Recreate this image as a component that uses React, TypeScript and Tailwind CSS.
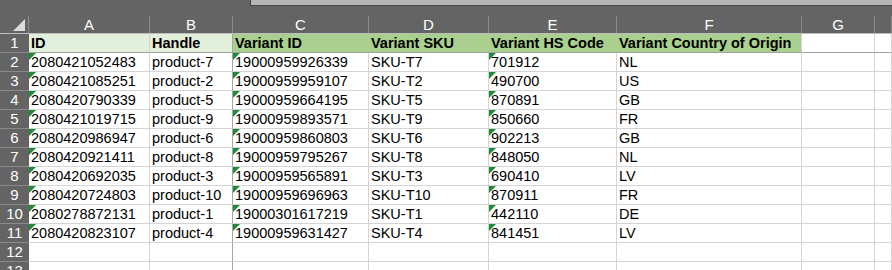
import React from "react";

const cols = [
  { key: "A", w: "w-[121px]" },
  { key: "B", w: "w-[83px]" },
  { key: "C", w: "w-[136px]" },
  { key: "D", w: "w-[120px]" },
  { key: "E", w: "w-[128px]" },
  { key: "F", w: "w-[185px]" },
  { key: "G", w: "w-[73px]" },
  { key: "", w: "flex-1" },
];

const headers = ["ID", "Handle", "Variant ID", "Variant SKU", "Variant HS Code", "Variant Country of Origin", "", ""];

const rows = [
  ["2080421052483", "product-7", "19000959926339", "SKU-T7", "701912", "NL"],
  ["2080421085251", "product-2", "19000959959107", "SKU-T2", "490700", "US"],
  ["2080420790339", "product-5", "19000959664195", "SKU-T5", "870891", "GB"],
  ["2080421019715", "product-9", "19000959893571", "SKU-T9", "850660", "FR"],
  ["2080420986947", "product-6", "19000959860803", "SKU-T6", "902213", "GB"],
  ["2080420921411", "product-8", "19000959795267", "SKU-T8", "848050", "NL"],
  ["2080420692035", "product-3", "19000959565891", "SKU-T3", "690410", "LV"],
  ["2080420724803", "product-10", "19000959696963", "SKU-T10", "870911", "FR"],
  ["2080278872131", "product-1", "19000301617219", "SKU-T1", "442110", "DE"],
  ["2080420823107", "product-4", "19000959631427", "SKU-T4", "841451", "LV"],
  ["", "", "", "", "", ""],
  ["", "", "", "", "", ""],
];

// columns A, C and E hold numbers stored as text
const flagged = [0, 2, 4];

const headerFill = (i: number) => {
  if (i < 2) return "bg-[#e2efda]";
  if (i < 6) return "bg-[#a9d08e]";
  return "bg-white";
};

const RowHead = ({ n }: { n: number }) => (
  <div className="w-[29px] h-[19px] shrink-0 bg-[#646464] border-b border-[#8a8a8a] text-center text-white text-[15px] leading-[18px]">
    {n}
  </div>
);

const App = () => {
  return (
    <div className="w-[892px] h-[270px] overflow-hidden bg-white font-['Liberation_Sans',Arial,sans-serif] text-black">
      {/* strip above the sheet */}
      <div className="h-[16px] bg-[#646464] flex">
        <div className="w-[250px]" />
        <div className="flex-1 h-[6px] bg-[#b6b6b6] border-l border-b border-[#454545]" />
      </div>

      {/* column letters */}
      <div className="flex h-[18px] bg-[#646464] border-b border-[#bdbdbd]">
        <div className="w-[29px] shrink-0 relative border-r border-[#8a8a8a]">
          <div className="absolute right-[3px] bottom-[2px] w-0 h-0 border-l-[12px] border-l-transparent border-b-[12px] border-b-[#dcdcdc]" />
        </div>
        {cols.map((c, i) => (
          <div key={i} className={`${c.w} shrink-0 border-r border-[#8a8a8a] text-center text-white text-[15px] leading-[17px]`}>
            {c.key}
          </div>
        ))}
      </div>

      {/* row 1: headings */}
      <div className="flex h-[19px]">
        <RowHead n={1} />
        {cols.map((c, i) => (
          <div
            key={i}
            className={`${c.w} shrink-0 ${headerFill(i)} border-b border-b-[#a0a0a0] ${i < 2 || i > 4 ? "border-r" : ""} ${i === 1 ? "border-r-[#a6a6a6]" : "border-r-[#d4d4d4]"} pl-[2px] font-bold text-[14.5px] leading-[19px] whitespace-nowrap overflow-hidden`}
          >
            {headers[i]}
          </div>
        ))}
      </div>

      {/* data rows */}
      {rows.map((r, ri) => (
        <div key={ri} className="flex h-[19px]">
          <RowHead n={ri + 2} />
          {cols.map((c, i) => (
            <div
              key={i}
              className={`${c.w} shrink-0 relative border-b border-r border-[#d4d4d4] ${i === 1 ? "border-r-[#a6a6a6]" : ""} pl-[2px] text-[14.5px] leading-[19px] whitespace-nowrap overflow-hidden`}
            >
              {r[i] && flagged.includes(i) && (
                <div className="absolute left-0 top-0 w-0 h-0 border-t-[7px] border-t-[#1f8a3a] border-r-[7px] border-r-transparent" />
              )}
              {r[i] ?? ""}
            </div>
          ))}
        </div>
      ))}
    </div>
  );
};

export default App;
